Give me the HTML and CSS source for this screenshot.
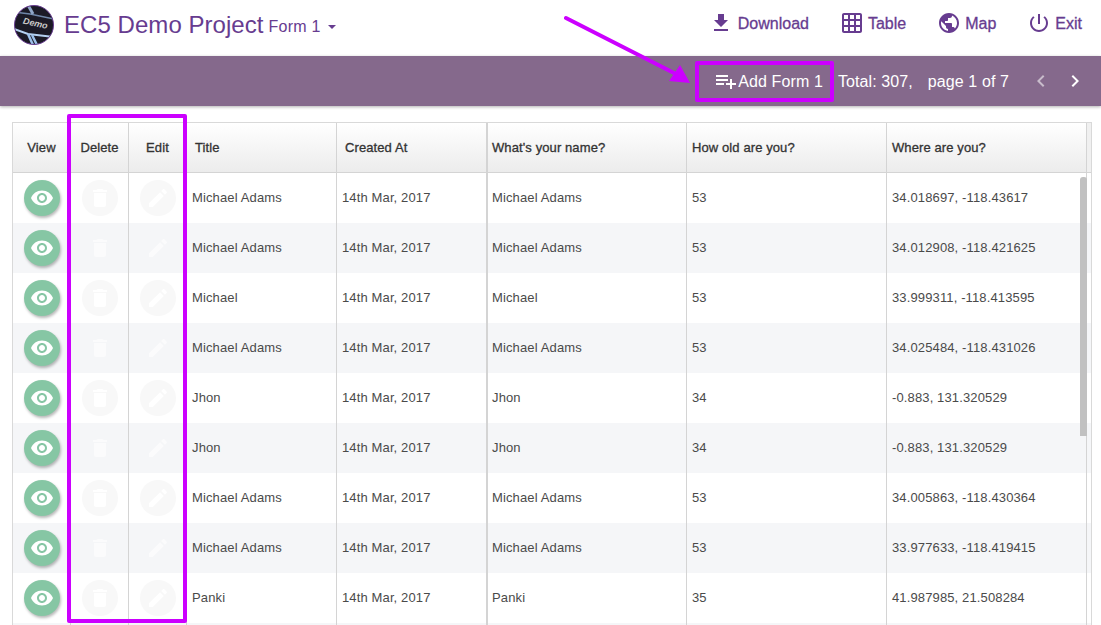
FILE: index.html
```html
<!DOCTYPE html>
<html lang="en">
<head>
<meta charset="utf-8">
<title>EC5 Demo Project</title>
<link rel="stylesheet" href="styles.css">
</head>
<body>
<header class="topbar">
  <div class="brand">
    <svg class="logo" viewBox="0 0 40 40" aria-hidden="true">
      <defs><clipPath id="lc"><circle cx="20" cy="20" r="19.500"/></clipPath></defs>
      <g clip-path="url(#lc)">
        <rect width="40" height="40" fill="#1b1a26"/>
        <path d="M0 7 L16 9 L40 14" stroke="#6f86a8" stroke-width="1.500" fill="none"/>
        <path d="M14 0 L19 9" stroke="#8fa6c8" stroke-width="3" fill="none"/>
        <path d="M0 24 L14 29 L40 32" stroke="#b4d0f0" stroke-width="2" fill="none"/>
        <path d="M14 29 L19 40 M18 30 L23 40" stroke="#9cc0ea" stroke-width="2.500" fill="none"/>
        <text x="9" y="21" transform="rotate(13 20 18)" class="logo-text">Demo</text>
      </g>
      <circle cx="20" cy="20" r="19.500" fill="none" stroke="#673c90" stroke-width="1"/>
    </svg>
    <span class="project">EC5 Demo Project</span>
    <span class="form">Form 1</span>
    <span class="caret"></span>
  </div>
  <nav class="nav">
    <a class="nav-item nav-dl"><svg class="nav-icon" viewBox="0 0 24 24"><path d="M19 9h-4V3H9v6H5l7 7 7-7zM5 18v2h14v-2H5z"/></svg>Download</a>
    <a class="nav-item"><svg class="nav-icon" viewBox="0 0 24 24"><path d="M20 2H4c-1.100 0-2 .9-2 2v16c0 1.100.9 2 2 2h16c1.100 0 2-.9 2-2V4c0-1.100-.9-2-2-2zM8 20H4v-4h4v4zm0-6H4v-4h4v4zm0-6H4V4h4v4zm6 12h-4v-4h4v4zm0-6h-4v-4h4v4zm0-6h-4V4h4v4zm6 12h-4v-4h4v4zm0-6h-4v-4h4v4zm0-6h-4V4h4v4z"/></svg>Table</a>
    <a class="nav-item"><svg class="nav-icon" viewBox="0 0 24 24"><path d="M12 2C6.480 2 2 6.480 2 12s4.480 10 10 10 10-4.480 10-10S17.520 2 12 2zm-1 17.930c-3.950-.49-7-3.850-7-7.930 0-.62.08-1.210.21-1.790L9 15v1c0 1.100.9 2 2 2v1.930zm6.900-2.540c-.26-.81-1-1.390-1.900-1.390h-1v-3c0-.55-.45-1-1-1H8v-2h2c.55 0 1-.45 1-1V7h2c1.100 0 2-.9 2-2v-.41c2.930 1.190 5 4.060 5 7.410 0 2.080-.8 3.970-2.100 5.390z"/></svg>Map</a>
    <a class="nav-item"><svg class="nav-icon" viewBox="0 0 24 24"><path d="M13 3h-2v10h2V3zm4.830 2.170l-1.420 1.420C17.990 7.860 19 9.810 19 12c0 3.870-3.130 7-7 7s-7-3.130-7-7c0-2.190 1.010-4.140 2.580-5.420L6.170 5.170C4.230 6.820 3 9.260 3 12c0 4.970 4.030 9 9 9s9-4.030 9-9c0-2.740-1.230-5.180-3.170-6.830z"/></svg>Exit</a>
  </nav>
</header>

<div class="toolbar">
  <a class="add"><svg class="add-icon" viewBox="0 0 24 24"><path d="M14 10H2v2h12v-2zm0-4H2v2h12V6zm4 8v-4h-2v4h-4v2h4v4h2v-4h4v-2h-4zM2 16h8v-2H2v2z"/></svg>Add Form 1</a>
  <span class="total">Total: 307,</span>
  <span class="page">page 1 of 7</span>
  <svg class="chev chev-off" viewBox="0 0 24 24"><path d="M15.410 7.410L14 6l-6 6 6 6 1.410-1.410L10.830 12z"/></svg>
  <svg class="chev" viewBox="0 0 24 24"><path d="M10 6L8.590 7.410 13.170 12l-4.580 4.590L10 18l6-6z"/></svg>
</div>

<main class="grid-wrap">
  <div class="grid">
    <div class="row head">
      <div class="cell c-btn center">View</div>
      <div class="cell c-btn center">Delete</div>
      <div class="cell c-btn center">Edit</div>
      <div class="cell c-title">Title</div>
      <div class="cell c-date">Created At</div>
      <div class="cell c-q first-q">What's your name?</div>
      <div class="cell c-q">How old are you?</div>
      <div class="cell c-q">Where are you?</div>
      <div class="gutter"></div>
    </div>
    <div id="rows"></div>
    <div class="row row-next">
      <div class="cell c-btn"></div>
      <div class="cell c-btn"></div>
      <div class="cell c-btn"></div>
      <div class="cell c-title"></div>
      <div class="cell c-date"></div>
      <div class="cell c-q first-q"></div>
      <div class="cell c-q"></div>
      <div class="cell c-q"></div>
    </div>
  </div>
  <div class="thumb"></div>
</main>

<div class="mark mark-cols"></div>
<div class="mark mark-add"></div>
<svg class="arrow" viewBox="0 0 150 80" aria-hidden="true">
  <path d="M2 4 L110 59" stroke="#cc00ff" stroke-width="4" stroke-linecap="round" fill="none"/>
  <path d="M126 69 L105 67 L116 51 Z" fill="#cc00ff"/>
</svg>

<template id="row-t">
  <div class="row">
    <div class="cell c-btn center"><span class="btn btn-view"><svg viewBox="0 0 24 24"><path d="M12 4.500C7 4.500 2.730 7.610 1 12c1.730 4.390 6 7.500 11 7.500s9.270-3.110 11-7.500c-1.730-4.390-6-7.500-11-7.500zM12 17c-2.760 0-5-2.240-5-5s2.240-5 5-5 5 2.240 5 5-2.240 5-5 5zm0-8c-1.660 0-3 1.340-3 3s1.340 3 3 3 3-1.340 3-3-1.340-3-3-3z"/></svg></span></div>
    <div class="cell c-btn center"><span class="btn btn-off"><svg viewBox="0 0 24 24"><path d="M6 19c0 1.100.9 2 2 2h8c1.100 0 2-.9 2-2V7H6v12zM19 4h-3.500l-1-1h-5l-1 1H5v2h14V4z"/></svg></span></div>
    <div class="cell c-btn center"><span class="btn btn-off"><svg viewBox="0 0 24 24"><path d="M3 17.250V21h3.750L17.810 9.940l-3.750-3.750L3 17.250zM20.710 7.040c.39-.39.39-1.020 0-1.410l-2.340-2.340c-.39-.39-1.020-.39-1.410 0l-1.830 1.830 3.750 3.750 1.830-1.830z"/></svg></span></div>
    <div class="cell c-title"></div>
    <div class="cell c-date"></div>
    <div class="cell c-q first-q"></div>
    <div class="cell c-q"></div>
    <div class="cell c-q"></div>
  </div>
</template>
<script src="rows.js"></script>
</body>
</html>
```
FILE: rows.js
```js
const data = [
  ["Michael Adams", "53", "34.018697, -118.43617"],
  ["Michael Adams", "53", "34.012908, -118.421625"],
  ["Michael", "53", "33.999311, -118.413595"],
  ["Michael Adams", "53", "34.025484, -118.431026"],
  ["Jhon", "34", "-0.883, 131.320529"],
  ["Jhon", "34", "-0.883, 131.320529"],
  ["Michael Adams", "53", "34.005863, -118.430364"],
  ["Michael Adams", "53", "33.977633, -118.419415"],
  ["Panki", "35", "41.987985, 21.508284"]
];
const host = document.getElementById("rows");
const tpl = document.getElementById("row-t");
data.forEach(([name, age, loc]) => {
  const row = tpl.content.cloneNode(true);
  const cells = row.querySelectorAll(".cell");
  cells[3].textContent = name;
  cells[4].textContent = "14th Mar, 2017";
  cells[5].textContent = name;
  cells[6].textContent = age;
  cells[7].textContent = loc;
  host.appendChild(row);
});
```
FILE: styles.css
```css
* { box-sizing: border-box; }
html, body { margin: 0; height: 625px; overflow: hidden; background: #fff; }
body { font-family: "Liberation Sans", Arial, sans-serif; position: relative; }

.topbar { height: 56px; display: flex; align-items: center; justify-content: space-between; padding: 0 19px 6px 14px; color: #673c90; }
.brand { display: flex; align-items: center; }
.logo { width: 40px; height: 40px; display: block; }
.logo-text { font: italic bold 9px "Liberation Sans", sans-serif; fill: #c9c9c9; }
.project { font-size: 24px; margin-left: 10px; letter-spacing: .05px; }
.form { font-size: 16px; margin-left: 5px; margin-top: 3px; letter-spacing: .25px; }
.caret { width: 0; height: 0; margin-left: 7px; margin-top: 4px; border: 4px solid transparent; border-top-color: #673c90; border-bottom: 0; }
.nav { display: flex; align-items: center; gap: 31px; margin-bottom: 2px; }
.nav-item { display: flex; align-items: center; font-size: 16px; -webkit-text-stroke: .3px #673c90; gap: 4px; }
.nav-dl { gap: 5px; }
.nav-icon { width: 24px; height: 24px; fill: #673c90; display: block; margin-bottom: 2px; }

.toolbar { height: 50px; background: #85698c; box-shadow: 0 1px 3px rgba(0,0,0,.3); display: flex; align-items: center; justify-content: flex-end; padding: 2px 14px 0 0; color: #fff; font-size: 16px; letter-spacing: .1px; position: relative; }
.add { display: flex; align-items: center; margin-right: 15px; }
.add-icon { width: 24px; height: 24px; fill: #fff; display: block; margin-bottom: 2px; }
.page { margin-left: 15px; margin-right: 20px; }
.chev { width: 24px; height: 24px; fill: #fff; margin-left: 10px; margin-bottom: 2px; display: block; }
.chev-off { fill: #c8bccb; margin-left: 0; }

.grid-wrap { position: relative; margin: 16px 0 0 12px; width: 1080px; }
.grid { border: 1px solid #d9d9d9; border-bottom: 0; }
.row { display: flex; height: 50px; background: #fff; font-size: 13px; color: #4a4a4a; letter-spacing: .13px; }
#rows .row:nth-child(even) { background: #f5f6f8; }
.row-next { background: #f5f6f8; }
.cell { display: flex; align-items: center; height: 100%; border-right: 1px solid #d4d4d4; white-space: nowrap; flex: none; padding-bottom: 2px; }
.center { justify-content: center; }
.c-btn { width: 58px; padding: 0; }
.c-title { width: 150px; padding-left: 5px; }
.c-date { width: 151px; padding-left: 5px; border-right-width: 2px; }
.c-q { width: 200px; padding-left: 5px; }
.first-q { padding-left: 4px; width: 199px; }
.head { background: linear-gradient(#fff, #ececec); border-bottom: 1px solid #d4d4d4; color: #333; letter-spacing: .1px; -webkit-text-stroke: .3px #333; }
.head .cell { padding-bottom: 0; }
.head .c-title, .head .c-date { padding-left: 8px; }
.head .first-q { padding-left: 4px; }
.gutter { flex: 1; background: #f0f0f0; }

.btn { width: 36px; height: 36px; border-radius: 50%; display: flex; align-items: center; justify-content: center; }
.btn svg { width: 24px; height: 24px; display: block; }
.btn-view { background: #86c6a4; box-shadow: 1px 2px 3px rgba(0,0,0,.28); }
.btn-view svg { fill: #fff; }
.btn-off { background: #f8f8f8; }
.btn-off svg { fill: #fff; }
#rows .row:nth-child(even) .btn-off { background: #f5f6f8; }
#rows .row:nth-child(even) .btn-off svg { fill: #fbfbfc; }

.thumb { position: absolute; left: 1068px; top: 55px; width: 7px; height: 259px; background: #c1c1c1; border-radius: 3px 3px 0 0; }

.mark { position: absolute; border: 4px solid #cc00ff; border-radius: 2px; }
.mark-cols { left: 67px; top: 114px; width: 120px; height: 509px; }
.mark-add { left: 695px; top: 61px; width: 139px; height: 41px; }
.arrow { position: absolute; left: 564px; top: 14px; width: 150px; height: 80px; }
```
